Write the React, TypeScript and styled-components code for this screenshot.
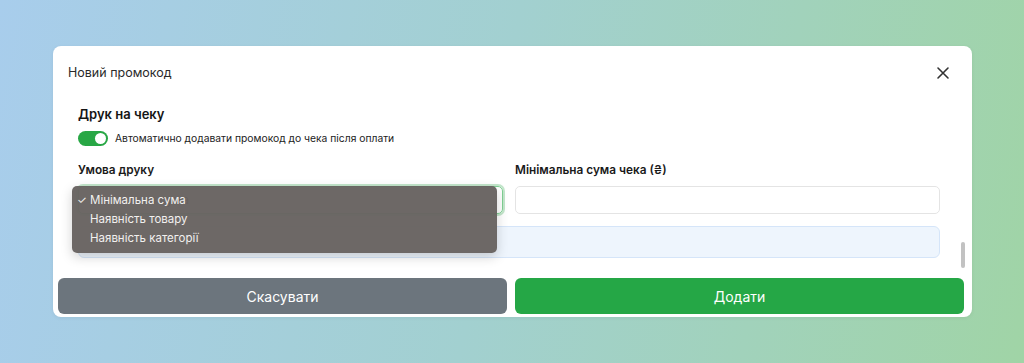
import React, {FC, useState} from 'react';
import styled, {createGlobalStyle} from 'styled-components';

const GlobalStyle = createGlobalStyle`
  html, body {
    margin: 0;
    padding: 0;
    height: 100%;
  }
  body {
    font-family: Inter, 'Noto Sans', 'Liberation Sans', sans-serif;
    -webkit-font-smoothing: antialiased;
  }
  #root {
    height: 100%;
  }
`;

const conditions = ['Мінімальна сума', 'Наявність товару', 'Наявність категорії'];

const App: FC = () => {
  const [autoPrint, setAutoPrint] = useState(true);
  const [condition, setCondition] = useState(conditions[0]);

  return (
    <>
      <GlobalStyle />
      <StyledBackdrop>
        <StyledModal>
          <StyledHeader>
            <StyledTitle>Новий промокод</StyledTitle>
            <StyledClose aria-label="close">
              <svg width="14" height="14" viewBox="0 0 14 14">
                <path d="M2 2L12 12M12 2L2 12" stroke="#333" strokeWidth="1.6" strokeLinecap="round" />
              </svg>
            </StyledClose>
          </StyledHeader>

          <StyledBody>
            <StyledSection>
              <StyledSectionTitle>Друк на чеку</StyledSectionTitle>
              <StyledToggleRow>
                <StyledToggle $on={autoPrint} onClick={() => setAutoPrint(!autoPrint)} />
                <StyledToggleText>Автоматично додавати промокод до чека після оплати</StyledToggleText>
              </StyledToggleRow>
            </StyledSection>

            <StyledGrid>
              <StyledField>
                <StyledLabel>Умова друку</StyledLabel>
                <StyledSelectWrap>
                  <StyledSelect $focused>{condition}</StyledSelect>
                  <StyledMenu>
                    {conditions.map((c) => (
                      <StyledMenuItem key={c} onClick={() => setCondition(c)}>
                        <StyledCheck>{c === condition ? '✓' : ''}</StyledCheck>
                        {c}
                      </StyledMenuItem>
                    ))}
                  </StyledMenu>
                </StyledSelectWrap>
              </StyledField>
              <StyledField>
                <StyledLabel>Мінімальна сума чека (₴)</StyledLabel>
                <StyledInput />
              </StyledField>
            </StyledGrid>

            <StyledInfo />
            <StyledScrollThumb />
          </StyledBody>

          <StyledFooter>
            <StyledButton $variant="secondary">Скасувати</StyledButton>
            <StyledButton $variant="primary">Додати</StyledButton>
          </StyledFooter>
        </StyledModal>
      </StyledBackdrop>
    </>
  );
};

const StyledBackdrop = styled.div`
  height: 363px;
  background: linear-gradient(100deg, #a8cdec 0%, #a2d0d0 48%, #a0d4a6 100%);
  padding: 46px 52px 0 53px;
  box-sizing: border-box;
`;

const StyledModal = styled.div`
  width: 919px;
  height: 271px;
  background: #fff;
  border-radius: 8px;
  display: flex;
  flex-direction: column;
  overflow: hidden;
  box-shadow: 0 1px 4px rgba(0, 0, 0, 0.06);
`;

const StyledHeader = styled.div`
  display: flex;
  align-items: center;
  justify-content: space-between;
  height: 54px;
  padding: 0 22px 0 15px;
  box-sizing: border-box;
`;

const StyledTitle = styled.div`
  font-size: 12.5px;
  color: #2b2b2b;
`;

const StyledClose = styled.button`
  border: none;
  background: none;
  padding: 0;
  display: flex;
  cursor: pointer;
`;

const StyledBody = styled.div`
  position: relative;
  height: 170px;
  overflow: hidden;
  padding: 6px 32px 0 25px;
  box-sizing: border-box;
  display: flex;
  flex-direction: column;
`;

const StyledSection = styled.div`
  display: flex;
  flex-direction: column;
  gap: 8px;
`;

const StyledSectionTitle = styled.div`
  font-size: 13px;
  font-weight: 600;
  color: #151515;
  line-height: 17px;
`;

const StyledToggleRow = styled.div`
  display: flex;
  align-items: center;
  gap: 7px;
`;

const StyledToggle = styled.div<{$on: boolean}>`
  position: relative;
  width: 30px;
  height: 15px;
  border-radius: 8px;
  background: ${(p) => (p.$on ? '#28a745' : '#ccc')};
  cursor: pointer;

  &::after {
    content: '';
    position: absolute;
    top: 2px;
    left: ${(p) => (p.$on ? '17px' : '2px')};
    width: 11px;
    height: 11px;
    border-radius: 50%;
    background: #fff;
  }
`;

const StyledToggleText = styled.span`
  font-size: 10.3px;
  color: #222;
`;

const StyledGrid = styled.div`
  display: grid;
  grid-template-columns: 1fr 1fr;
  gap: 12px;
  margin-top: 17px;
`;

const StyledField = styled.div`
  display: flex;
  flex-direction: column;
  gap: 8px;
`;

const StyledLabel = styled.div`
  font-size: 11.8px;
  font-weight: 600;
  color: #1a1a1a;
  line-height: 15px;
`;

const StyledSelectWrap = styled.div`
  position: relative;
`;

const StyledSelect = styled.div<{$focused?: boolean}>`
  height: 28px;
  border-radius: 5px;
  border: 1px solid ${(p) => (p.$focused ? '#7fcf93' : '#e3e3e3')};
  box-shadow: ${(p) => (p.$focused ? '0 0 0 2px rgba(40, 167, 69, 0.28)' : 'none')};
  box-sizing: border-box;
  font-size: 12px;
  padding: 0 10px;
  display: flex;
  align-items: center;
  color: #222;
`;

const StyledMenu = styled.div`
  position: absolute;
  top: 0;
  left: -6px;
  right: 6px;
  padding: 5px 0 5px;
  background: rgba(104, 99, 97, 0.97);
  border-radius: 5px;
  box-shadow: 0 4px 12px rgba(0, 0, 0, 0.18);
  z-index: 5;
`;

const StyledMenuItem = styled.div`
  display: flex;
  align-items: center;
  height: 19px;
  font-size: 11.5px;
  color: #f2f0ef;
  cursor: default;
`;

const StyledCheck = styled.span`
  width: 18px;
  padding-left: 5px;
  box-sizing: border-box;
  font-size: 11px;
`;

const StyledInput = styled.input`
  height: 28px;
  border-radius: 5px;
  border: 1px solid #e4e4e4;
  box-sizing: border-box;
  padding: 0 10px;
  font-size: 12px;
  outline: none;
`;

const StyledInfo = styled.div`
  margin-top: 12px;
  height: 32px;
  border-radius: 6px;
  background: #eef5fd;
  border: 1px solid #d5e5f9;
  box-sizing: border-box;
  flex-shrink: 0;
`;

const StyledScrollThumb = styled.div`
  position: absolute;
  right: 7px;
  bottom: 0;
  width: 4px;
  height: 26px;
  border-radius: 2px;
  background: #c2c2c2;
`;

const StyledFooter = styled.div`
  display: grid;
  grid-template-columns: 1fr 1fr;
  gap: 8px;
  padding: 10px 8px 3px 5px;
`;

const StyledButton = styled.button<{$variant: 'primary' | 'secondary'}>`
  height: 36px;
  border: none;
  border-radius: 6px;
  font-family: inherit;
  font-size: 14px;
  color: #fff;
  cursor: pointer;
  background: ${(p) => (p.$variant === 'primary' ? '#25a746' : '#6c757d')};
`;

export default App;
